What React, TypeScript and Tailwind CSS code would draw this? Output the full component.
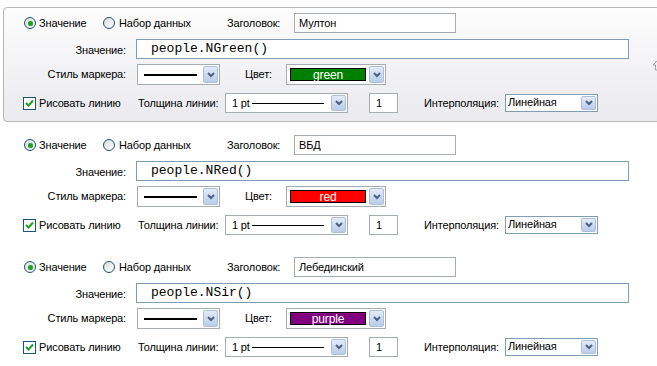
import React from 'react'

const font = "font-['Liberation_Sans',Arial,sans-serif] text-[11px] tracking-[-0.15px] text-black"

function DropArrow({ className = '' }: { className?: string }) {
  return (
    <div className={`flex items-center justify-center w-[15px] border border-[#aebfde] rounded-[2px] bg-linear-to-b from-[#e3ebf8] to-[#b9cceb] ${className}`}>
      <svg width="8" height="6" viewBox="0 0 8 6">
        <polyline points="1,1 4,4 7,1" fill="none" stroke="#4d6185" strokeWidth="2" />
      </svg>
    </div>
  )
}

function Radio({ checked }: { checked?: boolean }) {
  return (
    <span className="relative flex items-center justify-center w-[12px] h-[12px] rounded-full border border-[#1c5180] bg-linear-to-br from-[#dcdcd6] to-white">
      {checked && <span className="w-[5px] h-[5px] rounded-full bg-[#21a121] shadow-[0_0_1px_#7fd17f]" />}
    </span>
  )
}

function Checkbox() {
  return (
    <span className="flex items-center justify-center w-[13px] h-[13px] border border-[#1c5180] bg-white">
      <svg width="9" height="9" viewBox="0 0 9 9">
        <polyline points="1,4 3.5,6.5 8,1.5" fill="none" stroke="#21a121" strokeWidth="2" />
      </svg>
    </span>
  )
}

type SectionProps = { title: string; expr: string; color: string; colorName: string; selected?: boolean }

function Section({ title, expr, color, colorName, selected }: SectionProps) {
  return (
    <div
      className={`relative h-[116px] w-[664px] rounded-[4px] border pt-[5px] ${
        selected ? 'border-[#b7b7b7] bg-linear-to-b from-[#fdfdfd] to-[#eaeaef]' : 'border-transparent'
      }`}
    >
      {/* row 1 */}
      <div className="flex items-center h-[20px] pl-[20px]">
        <label className="flex items-center gap-[3px] w-[79px]">
          <Radio checked />
          <span>Значение</span>
        </label>
        <label className="flex items-center gap-[4px] w-[124px]">
          <Radio />
          <span>Набор данных</span>
        </label>
        <span className="w-[67px]">Заголовок:</span>
        <div className="w-[162px] h-[20px] border border-[#a5acb2] bg-white px-[4px] flex items-center">{title}</div>
      </div>

      {/* row 2 */}
      <div className="flex items-center h-[20px] mt-[6px]">
        <span className="w-[122px] text-right pt-[2px]">Значение:</span>
        <div className="ml-[10px] w-[493px] h-[20px] border border-[#7f9db9] bg-white pl-[14px] flex items-center font-['Liberation_Mono',monospace] text-[13px] tracking-normal">
          {expr}
        </div>
      </div>

      {/* row 3 */}
      <div className="flex items-center h-[21px] mt-[5px]">
        <span className="w-[122px] text-right">Стиль маркера:</span>
        <div className="ml-[11px] w-[83px] h-[21px] border border-[#a5acb2] bg-white flex items-center py-[1px] pr-[1px] pl-[6px]">
          <div className="w-[53px] h-[2px] bg-black" />
          <div className="flex-1" />
          <DropArrow className="h-[17px]" />
        </div>
        <span className="ml-[25px] w-[41px]">Цвет:</span>
        <div className="w-[100px] h-[21px] border border-[#a5acb2] bg-white flex items-center py-[1px] pr-[1px] pl-[3px]">
          <div
            className="w-[76px] h-[13px] border border-black flex items-center justify-center text-white text-[12px] leading-none pt-[1px]"
            style={{ backgroundColor: color }}
          >
            {colorName}
          </div>
          <div className="flex-1" />
          <DropArrow className="h-[17px]" />
        </div>
      </div>

      {/* row 4 */}
      <div className="flex items-center h-[20px] mt-[8px] pl-[19px]">
        <label className="flex items-center gap-[3px] w-[115px]">
          <Checkbox />
          <span>Рисовать линию</span>
        </label>
        <span className="w-[87px]">Толщина линии:</span>
        <div className="w-[123px] h-[20px] border border-[#a5acb2] bg-white flex items-center py-[1px] pr-[1px] pl-[6px]">
          <span>1 pt</span>
          <div className="ml-[2px] w-[72px] h-px bg-black" />
          <div className="flex-1" />
          <DropArrow className="h-[16px]" />
        </div>
        <div className="ml-[21px] w-[29px] h-[20px] border border-[#a5acb2] bg-white pl-[6px] flex items-center">1</div>
        <span className="ml-[26px] w-[81px]">Интерполяция:</span>
        <div className="w-[93px] h-[18px] border border-[#7f9db9] bg-white flex items-stretch pl-[2px] pr-[1px] py-[1px]">
          <span className="leading-[13px]">Линейная</span>
          <div className="flex-1" />
          <DropArrow />
        </div>
      </div>

      {selected && (
        <svg className="absolute left-[648px] top-[52px]" width="10" height="12" viewBox="0 0 10 12">
          <path d="M5 1 L1 5 L3.5 5 L3.5 10 L6.5 10 L6.5 5 L9 5 Z" fill="none" stroke="#a0a0a0" strokeWidth="1" />
        </svg>
      )}
    </div>
  )
}

export default function App() {
  return (
    <div className={`w-[657px] h-[366px] overflow-hidden bg-white pt-[7px] pl-[3px] flex flex-col gap-[7px] ${font}`}>
      <Section title="Мултон" expr="people.NGreen()" color="#008000" colorName="green" selected />
      <Section title="ВБД" expr="people.NRed()" color="#ff0000" colorName="red" />
      <Section title="Лебединский" expr="people.NSir()" color="#800080" colorName="purple" />
    </div>
  )
}
